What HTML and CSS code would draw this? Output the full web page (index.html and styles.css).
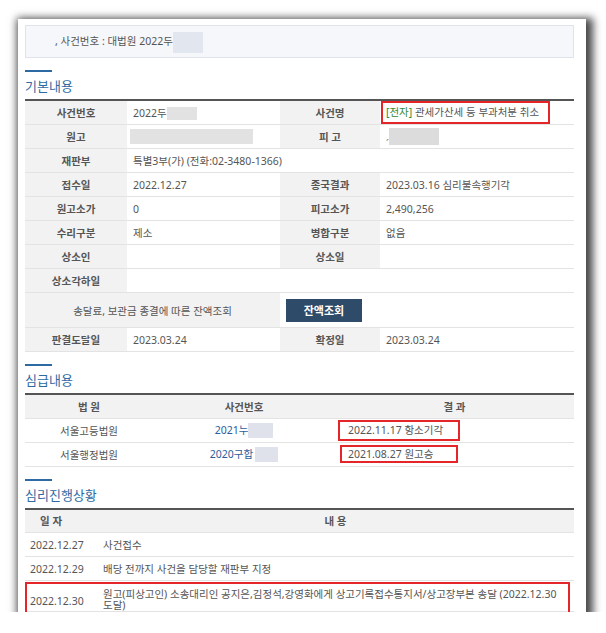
FILE: index.html
```html
<!DOCTYPE html>
<html lang="ko">
<head>
    <meta charset="UTF-8">
    <meta name="viewport" content="width=device-width, initial-scale=1.0">
    <title>사건일반내용</title>
    <link rel="stylesheet" href="styles.css">
</head>
<body>

<div class="frame">
    <div class="case-box">, 사건번호 : 대법원 2022두<span class="mask mask-top"></span></div>

    <h3 class="sec-title">기본내용</h3>
    <table class="info">
        <colgroup><col class="w102"><col class="w153"><col class="w100"><col></colgroup>
        <tr>
            <th>사건번호</th><td>2022두<span class="mask mask-no"></span></td>
            <th>사건명</th><td><span class="mark mark-name"><span class="elec">[전자]</span> 관세가산세 등 부과처분 취소</span></td>
        </tr>
        <tr>
            <th>원고</th><td><span class="mask mask-plaintiff"></span></td>
            <th>피 고</th><td><span class="dot">ˏ</span><span class="mask mask-defendant"></span></td>
        </tr>
        <tr>
            <th>재판부</th><td colspan="3">특별3부(가) (전화:02-3480-1366)</td>
        </tr>
        <tr>
            <th>접수일</th><td>2022.12.27</td>
            <th>종국결과</th><td>2023.03.16 심리불속행기각</td>
        </tr>
        <tr>
            <th>원고소가</th><td>0</td>
            <th>피고소가</th><td>2,490,256</td>
        </tr>
        <tr>
            <th>수리구분</th><td>제소</td>
            <th>병합구분</th><td>없음</td>
        </tr>
        <tr>
            <th>상소인</th><td></td>
            <th>상소일</th><td></td>
        </tr>
        <tr>
            <th>상소각하일</th><td colspan="3"></td>
        </tr>
        <tr class="tall">
            <th colspan="2" class="normal">송달료, 보관금 종결에 따른 잔액조회</th>
            <td colspan="2"><button class="btn">잔액조회</button></td>
        </tr>
        <tr>
            <th>판결도달일</th><td>2023.03.24</td>
            <th>확정일</th><td>2023.03.24</td>
        </tr>
    </table>

    <h3 class="sec-title">심급내용</h3>
    <table class="lower">
        <colgroup><col class="w128"><col class="w182"><col></colgroup>
        <tr><th>법 원</th><th>사건번호</th><th>결 과</th></tr>
        <tr>
            <td class="center">서울고등법원</td>
            <td class="center"><span class="case-link">2021누</span><span class="mask mask-l1"></span></td>
            <td class="result"><span class="mark mark-res">2022.11.17 항소기각</span></td>
        </tr>
        <tr>
            <td class="center">서울행정법원</td>
            <td class="center"><span class="case-link">2020구합</span><span class="mask mask-l2"></span></td>
            <td class="result"><span class="mark mark-res mark-res2">2021.08.27 원고승</span></td>
        </tr>
    </table>

    <h3 class="sec-title">심리진행상황</h3>
    <div class="progress-wrap">
        <table class="progress">
            <colgroup><col class="w72"><col></colgroup>
            <tr><th class="left">일 자</th><th>내 용</th></tr>
            <tr><td class="date">2022.12.27</td><td>사건접수</td></tr>
            <tr><td class="date">2022.12.29</td><td>배당 전까지 사건을 담당할 재판부 지정</td></tr>
            <tr class="wrap-row"><td class="date">2022.12.30</td><td>원고(피상고인) 소송대리인 공지은,김정석,강영화에게 상고기록접수통지서/상고장부본 송달 (2022.12.30 도달)</td></tr>
        </table>
        <div class="mark-row"></div>
    </div>
</div>

</body>
</html>
```

FILE: styles.css
```css
* { box-sizing: border-box; }
body { margin: 0; background: #fff; font-family: "Noto Sans", "Noto Sans CJK KR", sans-serif; font-size: 10.5px; color: #555; }

.frame { width: 568px; height: 593px; margin: 19px 0 0 18px; padding: 6px 12px 0 7px; background: #fff; overflow: hidden; box-shadow: 3px 3px 8px 4px rgba(0, 0, 0, .72); }

.case-box { height: 33px; border: 1px solid #dfe3ea; background: #f6f7fa; padding-left: 29px; line-height: 31px; }

.sec-title { margin: 12px 0 3px; font-size: 13px; font-weight: normal; line-height: 20px; color: #2d6aa3; }
.sec-title::before { content: ""; display: block; width: 27px; height: 2px; background: #2d6aa3; margin-bottom: 4px; }

table { width: 100%; border-collapse: collapse; table-layout: fixed; border-top: 2px solid #555; }
th, td { height: 24px; padding: 0 6px; border-bottom: 1px solid #e3e3e3; text-align: left; white-space: nowrap; }
th { background: #f2f2f2; color: #555; font-weight: bold; text-align: center; }
th.normal { font-weight: normal; color: #555; }
th.left { text-align: left; padding-left: 15px; }
td.center { text-align: center; }
td.result { padding-left: 13px; }
td.date { padding-left: 5px; }

.w102 { width: 102px; }
.w153 { width: 153px; }
.w100 { width: 100px; }
.w128 { width: 128px; }
.w182 { width: 182px; }
.w72 { width: 72px; }

tr.tall th, tr.tall td { height: 35px; }

.btn { width: 76px; height: 23px; border: 0; background: #2e4b69; color: #fff; font: bold 11px "Noto Sans", "Noto Sans CJK KR", sans-serif; vertical-align: middle; }

.mask { display: inline-block; vertical-align: middle; background: #e2e2e2; filter: blur(.6px); }
.mask-top { width: 30px; height: 21px; background: #e2e6ef; }
.mask-no { width: 30px; height: 13px; }
.mask-plaintiff { width: 123px; height: 15px; margin-left: -3px; }
.mask-defendant { width: 50px; height: 17px; background: #dcdcdc; }
.mask-l1 { width: 25px; height: 15px; background: #dfe2ea; }
.mask-l2 { width: 23px; height: 15px; background: #dfe2ea; margin-left: 2px; }
.dot { color: #888; }

.case-link { color: #2b5d9c; }
.elec { color: #2f8a36; }

.mark { display: inline-block; border: 2px solid #e4252a; vertical-align: middle; }
.mark-name { height: 23px; line-height: 19px; margin-left: -5px; padding: 0 9px 0 3px; }
.mark-res { width: 122px; height: 21px; line-height: 17px; margin-left: -10px; padding-left: 8px; }
.mark-res2 { width: 118px; height: 18px; line-height: 14px; margin-left: -8px; padding-left: 6px; }

.progress-wrap { position: relative; }
.progress td { white-space: normal; }
.wrap-row td { padding-top: 8px; line-height: 11px; vertical-align: top; }
.wrap-row td.date { padding-top: 15px; }
.mark-row { position: absolute; left: 0; right: 4px; top: 74px; height: 34px; border: 2px solid #e4252a; }
```
